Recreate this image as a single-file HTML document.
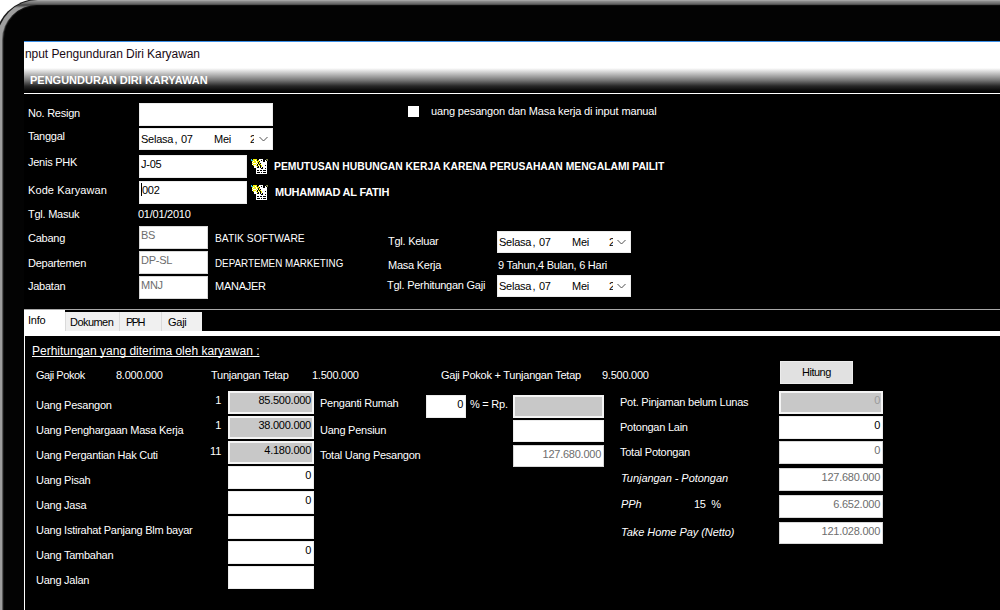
<!DOCTYPE html>
<html><head><meta charset="utf-8"><style>
html,body{margin:0;padding:0;width:1000px;height:610px;overflow:hidden;background:#fff}
#frame{position:absolute;left:-5px;top:-1px;width:1300px;height:900px;border-radius:43px;background:#1a1a1a}
#bezel{position:absolute;left:-3px;top:0px;width:1300px;height:900px;border-radius:41px;background:linear-gradient(#a5a5a5 0.5px,#8a8a8a 1.5px,#7a7a7a 2.5px,#6a6a6a 3.5px,#505050 4.5px,#505050 5.5px,#9e9e9e 8px)}
#la{position:absolute;left:2px;top:5px;width:1300px;height:900px;border-radius:35px;background:#030303;opacity:.43}
#lb{position:absolute;left:3px;top:5px;width:1300px;height:900px;border-radius:34px;background:#030303;opacity:.75}
#screen{position:absolute;left:4px;top:6px;width:1300px;height:900px;border-radius:33px;background:#030303}
.t{position:absolute;font:11px/13px "Liberation Sans",sans-serif;color:#fff;white-space:pre;letter-spacing:-0.25px}
.r{text-align:right}
.dk{color:#000}
.gy{color:#6d6d6d}
.b{font-weight:bold}
.i{font-style:italic}
.box{position:absolute;background:#fff;box-sizing:border-box;border:1px solid #ececec}
.gbox{position:absolute;background:#c8c8c8;box-sizing:border-box;border:2px solid #f4f4f4}
.lbox{position:absolute;background:#fff;box-sizing:border-box;border:1px solid #d8d8d8}
.abs{position:absolute}
</style></head><body>
<div id="frame"></div><div id="bezel"></div><div id="la"></div><div id="lb"></div><div id="screen"></div>
<div class="abs" style="left:24px;top:92px;width:980px;height:520px;background:#000"></div>
<div class="abs" style="left:24px;top:41px;width:980px;height:1px;background:#3a8ee6"></div>
<div class="abs" style="left:24px;top:42px;width:980px;height:50px;background:linear-gradient(#fff 0px,#fff 26px,#c8c8c8 31px,#7a7a7a 38px,#282828 44px,#050505 49px)"></div>
<div class="abs" style="left:24px;top:93px;width:980px;height:1px;background:#fff"></div>
<div class="t" style="left:25px;top:47px;font-size:12px;line-height:14px;color:#1a0a14;letter-spacing:-0.06px">nput Pengunduran Diri Karyawan</div>
<div class="t b" style="left:30px;top:74px;letter-spacing:0">PENGUNDURAN DIRI KARYAWAN</div>
<div class="t " style="left:28px;top:107px;">No. Resign</div>
<div class="t " style="left:28px;top:130px;">Tanggal</div>
<div class="t " style="left:28px;top:156px;">Jenis PHK</div>
<div class="t " style="left:28px;top:184px;letter-spacing:0.1px">Kode Karyawan</div>
<div class="t " style="left:28px;top:208px;">Tgl. Masuk</div>
<div class="t " style="left:28px;top:232px;">Cabang</div>
<div class="t " style="left:28px;top:257px;">Departemen</div>
<div class="t " style="left:28px;top:280px;">Jabatan</div>
<div class="box" style="left:139px;top:103px;width:134px;height:23px;"></div>
<div class="box" style="left:139px;top:128px;width:134px;height:22px;"></div>
<div class="t dk" style="left:141px;top:133px;">Selasa</div>
<div class="t dk" style="left:174.5px;top:133px;">,</div>
<div class="t dk" style="left:181px;top:133px;">07</div>
<div class="t dk" style="left:214px;top:133px;">Mei</div>
<div class="t dk" style="left:250px;top:133px;width:4px;overflow:hidden">2</div>
<svg class="abs" style="left:259px;top:136px" width="10" height="7" viewBox="0 0 10 7"><path d="M0.5 1 L4.5 5 L8.5 1" fill="none" stroke="#505050" stroke-width="1"/></svg>
<div class="box" style="left:139px;top:155px;width:108px;height:23px;"></div>
<div class="t dk" style="left:141px;top:158px;">J-05</div>
<div class="box" style="left:139px;top:181px;width:108px;height:23px;"></div>
<div class="t dk" style="left:142px;top:184px;">002</div>
<div class="abs" style="left:141px;top:183px;width:1px;height:13px;background:#000"></div>
<div class="t " style="left:138px;top:208px;">01/01/2010</div>
<div class="lbox" style="left:139px;top:226px;width:69px;height:23px;"></div>
<div class="t gy" style="left:141px;top:229px;">BS</div>
<div class="lbox" style="left:139px;top:251px;width:69px;height:23px;"></div>
<div class="t gy" style="left:141px;top:254px;">DP-SL</div>
<div class="lbox" style="left:139px;top:276px;width:69px;height:23px;"></div>
<div class="t gy" style="left:141px;top:279px;">MNJ</div>
<div class="t " style="left:215px;top:232px;letter-spacing:0px;transform:scaleX(0.935);transform-origin:0 0">BATIK SOFTWARE</div>
<div class="t " style="left:215px;top:257px;letter-spacing:0px;transform:scaleX(0.892);transform-origin:0 0">DEPARTEMEN MARKETING</div>
<div class="t " style="left:215px;top:280px;">MANAJER</div>
<svg class="abs" style="left:250px;top:157px" width="18" height="17" shape-rendering="crispEdges"><rect x="1" y="2" width="1" height="1" fill="#2ec8f0"/><rect x="3" y="2" width="4" height="1" fill="#f2f000"/><rect x="9" y="2" width="4" height="1" fill="#ffffff"/><rect x="16" y="2" width="2" height="1" fill="#7a8040"/><rect x="1" y="3" width="2" height="1" fill="#2ec8f0"/><rect x="3" y="3" width="2" height="1" fill="#f2f000"/><rect x="5" y="3" width="1" height="1" fill="#ffffff"/><rect x="6" y="3" width="1" height="1" fill="#f2f000"/><rect x="8" y="3" width="1" height="1" fill="#f2f000"/><rect x="9" y="3" width="2" height="1" fill="#ffffff"/><rect x="12" y="3" width="1" height="1" fill="#ffffff"/><rect x="15" y="3" width="1" height="1" fill="#ffffff"/><rect x="17" y="3" width="1" height="1" fill="#7a8040"/><rect x="2" y="4" width="1" height="1" fill="#f2f000"/><rect x="3" y="4" width="1" height="1" fill="#ffffff"/><rect x="4" y="4" width="2" height="1" fill="#f2f000"/><rect x="6" y="4" width="1" height="1" fill="#ffffff"/><rect x="7" y="4" width="2" height="1" fill="#f2f000"/><rect x="10" y="4" width="3" height="1" fill="#ffffff"/><rect x="15" y="4" width="2" height="1" fill="#ffffff"/><rect x="2" y="5" width="1" height="1" fill="#ffffff"/><rect x="3" y="5" width="3" height="1" fill="#f2f000"/><rect x="6" y="5" width="1" height="1" fill="#ffffff"/><rect x="7" y="5" width="1" height="1" fill="#f2f000"/><rect x="9" y="5" width="1" height="1" fill="#f2f000"/><rect x="10" y="5" width="7" height="1" fill="#ffffff"/><rect x="2" y="6" width="1" height="1" fill="#f2f000"/><rect x="3" y="6" width="3" height="1" fill="#ffffff"/><rect x="6" y="6" width="1" height="1" fill="#f2f000"/><rect x="7" y="6" width="1" height="1" fill="#ffffff"/><rect x="9" y="6" width="1" height="1" fill="#f2f000"/><rect x="11" y="6" width="6" height="1" fill="#ffffff"/><rect x="2" y="7" width="1" height="1" fill="#ffffff"/><rect x="3" y="7" width="3" height="1" fill="#f2f000"/><rect x="6" y="7" width="1" height="1" fill="#ffffff"/><rect x="8" y="7" width="1" height="1" fill="#f2f000"/><rect x="10" y="7" width="1" height="1" fill="#f2f000"/><rect x="11" y="7" width="6" height="1" fill="#ffffff"/><rect x="3" y="8" width="1" height="1" fill="#f2f000"/><rect x="4" y="8" width="2" height="1" fill="#ffffff"/><rect x="6" y="8" width="1" height="1" fill="#f2f000"/><rect x="8" y="8" width="1" height="1" fill="#ffffff"/><rect x="9" y="8" width="1" height="1" fill="#f2f000"/><rect x="11" y="8" width="1" height="1" fill="#f2f000"/><rect x="12" y="8" width="3" height="1" fill="#ffffff"/><rect x="16" y="8" width="1" height="1" fill="#ffffff"/><rect x="4" y="9" width="3" height="1" fill="#ffffff"/><rect x="7" y="9" width="1" height="1" fill="#f2f000"/><rect x="9" y="9" width="1" height="1" fill="#ffffff"/><rect x="11" y="9" width="1" height="1" fill="#f2f000"/><rect x="12" y="9" width="5" height="1" fill="#ffffff"/><rect x="4" y="10" width="3" height="1" fill="#ffffff"/><rect x="9" y="10" width="1" height="1" fill="#ffffff"/><rect x="11" y="10" width="1" height="1" fill="#ffffff"/><rect x="13" y="10" width="4" height="1" fill="#ffffff"/><rect x="6" y="11" width="5" height="1" fill="#ffffff"/><rect x="13" y="11" width="2" height="1" fill="#ffffff"/><rect x="16" y="11" width="1" height="1" fill="#ffffff"/><rect x="6" y="12" width="11" height="1" fill="#ffffff"/><rect x="6" y="13" width="1" height="1" fill="#ffffff"/><rect x="9" y="13" width="1" height="1" fill="#ffffff"/><rect x="12" y="13" width="1" height="1" fill="#ffffff"/><rect x="16" y="13" width="1" height="1" fill="#ffffff"/><rect x="6" y="14" width="11" height="1" fill="#ffffff"/><rect x="6" y="15" width="1" height="1" fill="#ffffff"/><rect x="10" y="15" width="1" height="1" fill="#ffffff"/><rect x="12" y="15" width="1" height="1" fill="#ffffff"/><rect x="16" y="15" width="1" height="1" fill="#ffffff"/><rect x="6" y="16" width="11" height="1" fill="#ffffff"/></svg>
<svg class="abs" style="left:250px;top:183px" width="18" height="17" shape-rendering="crispEdges"><rect x="1" y="2" width="1" height="1" fill="#2ec8f0"/><rect x="3" y="2" width="4" height="1" fill="#f2f000"/><rect x="9" y="2" width="4" height="1" fill="#ffffff"/><rect x="16" y="2" width="2" height="1" fill="#7a8040"/><rect x="1" y="3" width="2" height="1" fill="#2ec8f0"/><rect x="3" y="3" width="2" height="1" fill="#f2f000"/><rect x="5" y="3" width="1" height="1" fill="#ffffff"/><rect x="6" y="3" width="1" height="1" fill="#f2f000"/><rect x="8" y="3" width="1" height="1" fill="#f2f000"/><rect x="9" y="3" width="2" height="1" fill="#ffffff"/><rect x="12" y="3" width="1" height="1" fill="#ffffff"/><rect x="15" y="3" width="1" height="1" fill="#ffffff"/><rect x="17" y="3" width="1" height="1" fill="#7a8040"/><rect x="2" y="4" width="1" height="1" fill="#f2f000"/><rect x="3" y="4" width="1" height="1" fill="#ffffff"/><rect x="4" y="4" width="2" height="1" fill="#f2f000"/><rect x="6" y="4" width="1" height="1" fill="#ffffff"/><rect x="7" y="4" width="2" height="1" fill="#f2f000"/><rect x="10" y="4" width="3" height="1" fill="#ffffff"/><rect x="15" y="4" width="2" height="1" fill="#ffffff"/><rect x="2" y="5" width="1" height="1" fill="#ffffff"/><rect x="3" y="5" width="3" height="1" fill="#f2f000"/><rect x="6" y="5" width="1" height="1" fill="#ffffff"/><rect x="7" y="5" width="1" height="1" fill="#f2f000"/><rect x="9" y="5" width="1" height="1" fill="#f2f000"/><rect x="10" y="5" width="7" height="1" fill="#ffffff"/><rect x="2" y="6" width="1" height="1" fill="#f2f000"/><rect x="3" y="6" width="3" height="1" fill="#ffffff"/><rect x="6" y="6" width="1" height="1" fill="#f2f000"/><rect x="7" y="6" width="1" height="1" fill="#ffffff"/><rect x="9" y="6" width="1" height="1" fill="#f2f000"/><rect x="11" y="6" width="6" height="1" fill="#ffffff"/><rect x="2" y="7" width="1" height="1" fill="#ffffff"/><rect x="3" y="7" width="3" height="1" fill="#f2f000"/><rect x="6" y="7" width="1" height="1" fill="#ffffff"/><rect x="8" y="7" width="1" height="1" fill="#f2f000"/><rect x="10" y="7" width="1" height="1" fill="#f2f000"/><rect x="11" y="7" width="6" height="1" fill="#ffffff"/><rect x="3" y="8" width="1" height="1" fill="#f2f000"/><rect x="4" y="8" width="2" height="1" fill="#ffffff"/><rect x="6" y="8" width="1" height="1" fill="#f2f000"/><rect x="8" y="8" width="1" height="1" fill="#ffffff"/><rect x="9" y="8" width="1" height="1" fill="#f2f000"/><rect x="11" y="8" width="1" height="1" fill="#f2f000"/><rect x="12" y="8" width="3" height="1" fill="#ffffff"/><rect x="16" y="8" width="1" height="1" fill="#ffffff"/><rect x="4" y="9" width="3" height="1" fill="#ffffff"/><rect x="7" y="9" width="1" height="1" fill="#f2f000"/><rect x="9" y="9" width="1" height="1" fill="#ffffff"/><rect x="11" y="9" width="1" height="1" fill="#f2f000"/><rect x="12" y="9" width="5" height="1" fill="#ffffff"/><rect x="4" y="10" width="3" height="1" fill="#ffffff"/><rect x="9" y="10" width="1" height="1" fill="#ffffff"/><rect x="11" y="10" width="1" height="1" fill="#ffffff"/><rect x="13" y="10" width="4" height="1" fill="#ffffff"/><rect x="6" y="11" width="5" height="1" fill="#ffffff"/><rect x="13" y="11" width="2" height="1" fill="#ffffff"/><rect x="16" y="11" width="1" height="1" fill="#ffffff"/><rect x="6" y="12" width="11" height="1" fill="#ffffff"/><rect x="6" y="13" width="1" height="1" fill="#ffffff"/><rect x="9" y="13" width="1" height="1" fill="#ffffff"/><rect x="12" y="13" width="1" height="1" fill="#ffffff"/><rect x="16" y="13" width="1" height="1" fill="#ffffff"/><rect x="6" y="14" width="11" height="1" fill="#ffffff"/><rect x="6" y="15" width="1" height="1" fill="#ffffff"/><rect x="10" y="15" width="1" height="1" fill="#ffffff"/><rect x="12" y="15" width="1" height="1" fill="#ffffff"/><rect x="16" y="15" width="1" height="1" fill="#ffffff"/><rect x="6" y="16" width="11" height="1" fill="#ffffff"/></svg>
<div class="t b" style="left:274px;top:160px;letter-spacing:0px;transform:scaleX(0.94);transform-origin:0 0">PEMUTUSAN HUBUNGAN KERJA KARENA PERUSAHAAN MENGALAMI PAILIT</div>
<div class="t b" style="left:275px;top:186px;">MUHAMMAD AL FATIH</div>
<div class="abs" style="left:408px;top:106px;width:11px;height:11px;background:#fff"></div>
<div class="t " style="left:431px;top:105px;letter-spacing:-0.14px">uang pesangon dan Masa kerja di input manual</div>
<div class="t " style="left:388px;top:235px;">Tgl. Keluar</div>
<div class="t " style="left:388px;top:259px;">Masa Kerja</div>
<div class="t " style="left:387px;top:279px;">Tgl. Perhitungan Gaji</div>
<div class="box" style="left:497px;top:231px;width:134px;height:22px;"></div>
<div class="t dk" style="left:499px;top:236px;">Selasa</div>
<div class="t dk" style="left:532.5px;top:236px;">,</div>
<div class="t dk" style="left:539px;top:236px;">07</div>
<div class="t dk" style="left:572px;top:236px;">Mei</div>
<div class="t dk" style="left:609px;top:236px;width:4px;overflow:hidden">2</div>
<svg class="abs" style="left:617px;top:239px" width="10" height="7" viewBox="0 0 10 7"><path d="M0.5 1 L4.5 5 L8.5 1" fill="none" stroke="#505050" stroke-width="1"/></svg>
<div class="box" style="left:497px;top:275px;width:134px;height:22px;"></div>
<div class="t dk" style="left:499px;top:280px;">Selasa</div>
<div class="t dk" style="left:532.5px;top:280px;">,</div>
<div class="t dk" style="left:539px;top:280px;">07</div>
<div class="t dk" style="left:572px;top:280px;">Mei</div>
<div class="t dk" style="left:609px;top:280px;width:4px;overflow:hidden">2</div>
<svg class="abs" style="left:617px;top:283px" width="10" height="7" viewBox="0 0 10 7"><path d="M0.5 1 L4.5 5 L8.5 1" fill="none" stroke="#505050" stroke-width="1"/></svg>
<div class="t " style="left:498px;top:259px;">9 Tahun,4 Bulan, 6 Hari</div>
<div class="abs" style="left:24px;top:309px;width:41px;height:27px;background:#fff"></div>
<div class="abs" style="left:65px;top:312px;width:54px;height:19px;background:#f0f0f0;box-sizing:border-box;border-left:1px solid #dadada"></div>
<div class="t dk" style="left:70px;top:316px;letter-spacing:-0.55px">Dokumen</div>
<div class="abs" style="left:119px;top:312px;width:42px;height:19px;background:#f0f0f0;box-sizing:border-box;border-left:1px solid #dadada"></div>
<div class="t dk" style="left:126px;top:316px;letter-spacing:-1.6px">PPH</div>
<div class="abs" style="left:161px;top:312px;width:41px;height:19px;background:#f0f0f0;box-sizing:border-box;border-left:1px solid #dadada"></div>
<div class="t dk" style="left:168px;top:316px;letter-spacing:-0.25px">Gaji</div>
<div class="t dk" style="left:28px;top:314px;">Info</div>
<div class="abs" style="left:24px;top:309px;width:980px;height:1px;background:#a8a8a8"></div>
<div class="abs" style="left:24px;top:331px;width:980px;height:5px;background:#fff"></div>
<div class="abs" style="left:24px;top:336px;width:1px;height:280px;background:#fff"></div>
<div class="t" style="left:32px;top:344px;font-size:12px;line-height:14px;letter-spacing:0;text-decoration:underline;text-decoration-skip-ink:none">Perhitungan yang diterima oleh karyawan :</div>
<div class="t " style="left:36px;top:369px;letter-spacing:-0.45px">Gaji Pokok</div>
<div class="t " style="left:116px;top:369px;">8.000.000</div>
<div class="t " style="left:211px;top:369px;">Tunjangan Tetap</div>
<div class="t " style="left:312px;top:369px;">1.500.000</div>
<div class="t " style="left:441px;top:369px;">Gaji Pokok + Tunjangan Tetap</div>
<div class="t " style="left:602px;top:369px;">9.500.000</div>
<div class="abs" style="left:780px;top:361px;width:73px;height:23px;background:#e1e1e1;box-sizing:border-box;border:1px solid #ececec"></div>
<div class="t dk" style="left:802px;top:366px;letter-spacing:-0.5px">Hitung</div>
<div class="t " style="left:36px;top:399px;">Uang Pesangon</div>
<div class="t " style="left:36px;top:424px;">Uang Penghargaan Masa Kerja</div>
<div class="t " style="left:36px;top:449px;">Uang Pergantian Hak Cuti</div>
<div class="t " style="left:36px;top:474px;">Uang Pisah</div>
<div class="t " style="left:36px;top:499px;">Uang Jasa</div>
<div class="t " style="left:36px;top:524px;">Uang Istirahat Panjang Blm bayar</div>
<div class="t " style="left:36px;top:549px;">Uang Tambahan</div>
<div class="t " style="left:36px;top:574px;">Uang Jalan</div>
<div class="gbox" style="left:228px;top:391px;width:86px;height:23px;"></div>
<div class="t r dk" style="left:11px;width:300px;top:394px;">85.500.000</div>
<div class="gbox" style="left:228px;top:416px;width:86px;height:23px;"></div>
<div class="t r dk" style="left:11px;width:300px;top:419px;">38.000.000</div>
<div class="gbox" style="left:228px;top:441px;width:86px;height:23px;"></div>
<div class="t r dk" style="left:11px;width:300px;top:444px;">4.180.000</div>
<div class="box" style="left:228px;top:466px;width:86px;height:23px;"></div>
<div class="t r dk" style="left:11px;width:300px;top:469px;">0</div>
<div class="box" style="left:228px;top:491px;width:86px;height:23px;"></div>
<div class="t r dk" style="left:11px;width:300px;top:494px;">0</div>
<div class="box" style="left:228px;top:516px;width:86px;height:23px;"></div>
<div class="box" style="left:228px;top:541px;width:86px;height:23px;"></div>
<div class="t r dk" style="left:11px;width:300px;top:544px;">0</div>
<div class="box" style="left:228px;top:566px;width:86px;height:23px;"></div>
<div class="t r " style="left:-79px;width:300px;top:394px;">1</div>
<div class="t r " style="left:-79px;width:300px;top:419px;">1</div>
<div class="t r " style="left:-79px;width:300px;top:445px;">11</div>
<div class="t " style="left:320px;top:397px;">Penganti Rumah</div>
<div class="t " style="left:320px;top:424px;">Uang Pensiun</div>
<div class="t " style="left:320px;top:449px;">Total Uang Pesangon</div>
<div class="box" style="left:426px;top:395px;width:40px;height:23px;"></div>
<div class="t r dk" style="left:163px;width:300px;top:398px;">0</div>
<div class="t " style="left:470px;top:398px;">% = Rp.</div>
<div class="gbox" style="left:513px;top:395px;width:91px;height:23px;"></div>
<div class="box" style="left:513px;top:420px;width:91px;height:22px;"></div>
<div class="lbox" style="left:513px;top:445px;width:91px;height:22px;"></div>
<div class="t r gy" style="left:301px;width:300px;top:448px;">127.680.000</div>
<div class="t " style="left:620px;top:396px;">Pot. Pinjaman belum Lunas</div>
<div class="t " style="left:620px;top:421px;">Potongan Lain</div>
<div class="t " style="left:620px;top:446px;">Total Potongan</div>
<div class="t i" style="left:621px;top:472px;letter-spacing:-0.05px">Tunjangan - Potongan</div>
<div class="t i" style="left:621px;top:498px;letter-spacing:-0.05px">PPh</div>
<div class="t i" style="left:621px;top:526px;letter-spacing:-0.05px">Take Home Pay (Netto)</div>
<div class="t " style="left:694px;top:498px;">15  %</div>
<div class="gbox" style="left:779px;top:391px;width:104px;height:23px;"></div>
<div class="t r " style="left:580px;width:300px;top:394px;color:#9a9a9a">0</div>
<div class="box" style="left:779px;top:416px;width:104px;height:23px;"></div>
<div class="t r dk" style="left:580px;width:300px;top:419px;">0</div>
<div class="lbox" style="left:779px;top:441px;width:104px;height:23px;"></div>
<div class="t r gy" style="left:580px;width:300px;top:444px;">0</div>
<div class="lbox" style="left:779px;top:468px;width:104px;height:23px;"></div>
<div class="t r gy" style="left:580px;width:300px;top:471px;">127.680.000</div>
<div class="lbox" style="left:779px;top:495px;width:104px;height:23px;"></div>
<div class="t r gy" style="left:580px;width:300px;top:498px;">6.652.000</div>
<div class="lbox" style="left:779px;top:522px;width:104px;height:22px;"></div>
<div class="t r gy" style="left:580px;width:300px;top:525px;">121.028.000</div>
</body></html>
